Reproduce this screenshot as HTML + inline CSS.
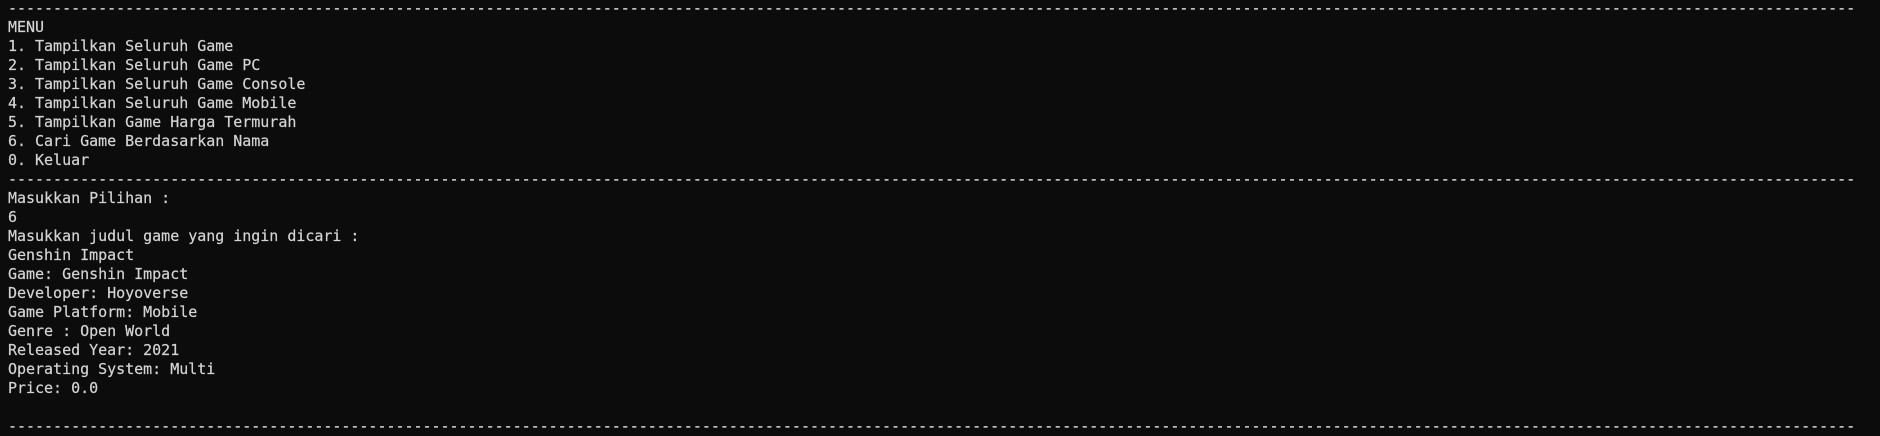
<!DOCTYPE html>
<html><head><meta charset="utf-8"><style>
html,body{margin:0;padding:0;background:#0c0c0c;width:1880px;height:434px;overflow:hidden}
pre{margin:0;position:absolute;left:8px;top:-1px;font-family:"DejaVu Sans Mono","Liberation Mono",monospace;font-size:15px;line-height:19px;color:#d4d4d4;letter-spacing:-0.02px;-webkit-text-stroke:0.2px #d4d4d4}
</style></head><body>
<pre>-------------------------------------------------------------------------------------------------------------------------------------------------------------------------------------------------------------
MENU
1. Tampilkan Seluruh Game
2. Tampilkan Seluruh Game PC
3. Tampilkan Seluruh Game Console
4. Tampilkan Seluruh Game Mobile
5. Tampilkan Game Harga Termurah
6. Cari Game Berdasarkan Nama
0. Keluar
-------------------------------------------------------------------------------------------------------------------------------------------------------------------------------------------------------------
Masukkan Pilihan :
6
Masukkan judul game yang ingin dicari :
Genshin Impact
Game: Genshin Impact
Developer: Hoyoverse
Game Platform: Mobile
Genre : Open World
Released Year: 2021
Operating System: Multi
Price: 0.0

-------------------------------------------------------------------------------------------------------------------------------------------------------------------------------------------------------------</pre>
</body></html>
